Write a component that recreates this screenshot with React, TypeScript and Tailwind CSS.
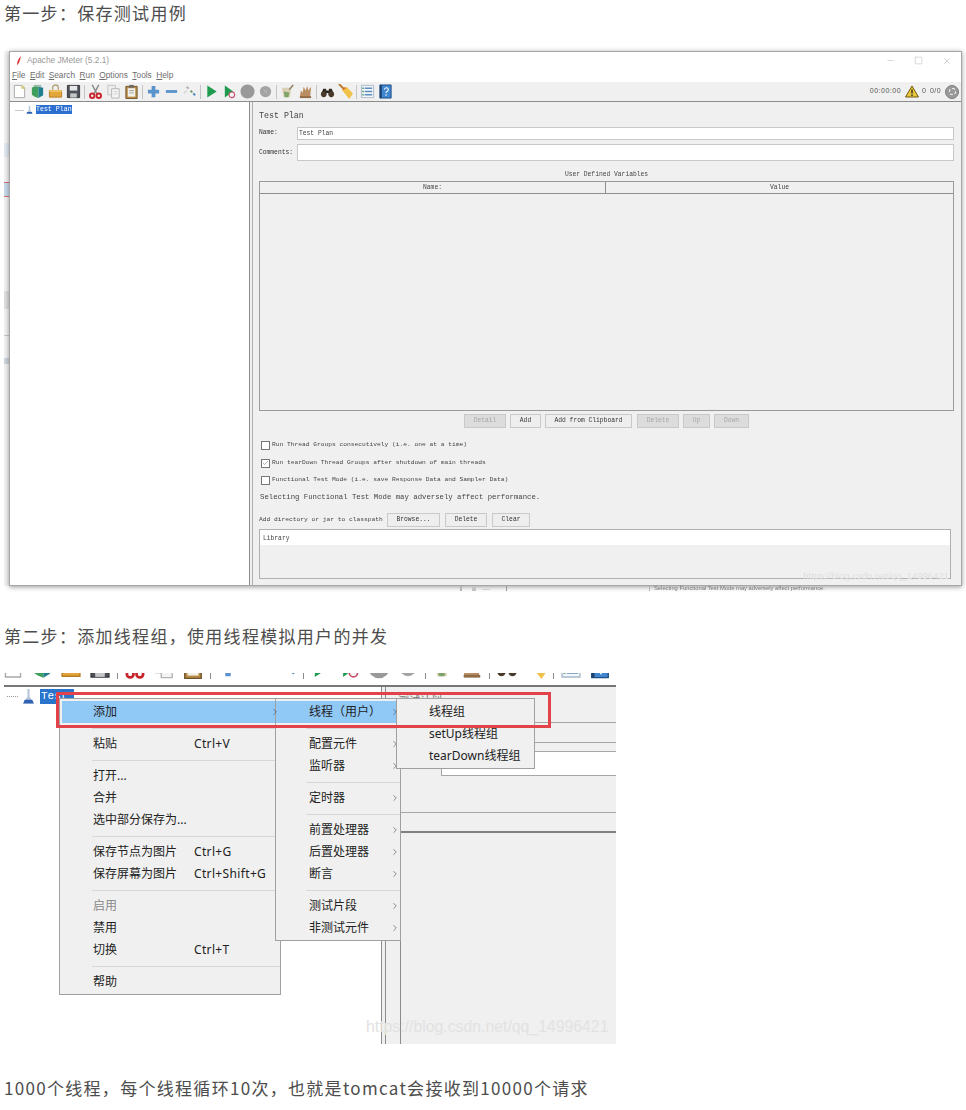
import { Minus, Square, X, Check, ChevronRight } from "lucide-react";

const Icon = ({ name, size = 16 }: { name: string; size?: number }) => {
  const shapes: Record<string, React.ReactNode> = {
    new: (
      <>
        <path d="M2.5 1.5h8l3 3v10h-11z" fill="#fff" stroke="#a8a8a8" />
        <path d="M10.5 1.5v3h3z" fill="#efe38a" stroke="#c8bd62" />
      </>
    ),
    templates: (
      <>
        <path d="M2 4l4-2.5 3 1.5v12l-4-1.5-3-2z" fill="#3f9f5d" />
        <path d="M9 3l5 1v8l-5 3z" fill="#1f7f8f" />
        <path d="M4 1h8v2H4z" fill="#9fb9a8" />
      </>
    ),
    open: (
      <>
        <path d="M5 6V3.500a3 2.500 0 0 1 6 0V6" fill="none" stroke="#b9a27a" strokeWidth="1.500" />
        <path d="M1.500 7h13v7h-13z" fill="#e3a63a" stroke="#b97f24" />
        <path d="M1.500 6.500h13v2h-13z" fill="#f2c465" />
      </>
    ),
    save: (
      <>
        <path d="M1.500 1.500h13v13h-13z" fill="#4c5258" stroke="#34383c" />
        <path d="M4 2h8v5H4z" fill="#e8e8e8" />
        <path d="M4.500 10h7v4.500h-7z" fill="#c4c6c8" />
      </>
    ),
    cut: (
      <>
        <path d="M4.500 1l4.800 9M11.500 1L6.700 10" stroke="#8b8b8b" strokeWidth="1.500" fill="none" />
        <circle cx="4.500" cy="12.500" r="2.400" fill="none" stroke="#c9232b" strokeWidth="2" />
        <circle cx="11.500" cy="12.500" r="2.400" fill="none" stroke="#c9232b" strokeWidth="2" />
      </>
    ),
    copy: (
      <>
        <path d="M2 1.500h8v10H2z" fill="#efefef" stroke="#c0c0c0" />
        <path d="M6 5h8v10H6z" fill="#f4f4f4" stroke="#b4b4b4" />
        <path d="M8 8h4M8 10.500h4" stroke="#cfcfcf" />
      </>
    ),
    paste: (
      <>
        <path d="M2 2.500h12v13H2z" fill="#b98a43" stroke="#6e5330" />
        <path d="M4 4.500h8v9H4z" fill="#f2f0ea" />
        <path d="M5.500 1h5v3h-5z" fill="#6f6a62" />
        <path d="M5.500 7h5M5.500 9.500h5" stroke="#9c9c9c" />
      </>
    ),
    plus: <path d="M6 2h4v4h4v4h-4v4H6v-4H2V6h4z" fill="#5b93cc" />,
    minus: <path d="M2 6.500h12v3H2z" fill="#5b93cc" />,
    toggle: (
      <>
        <path d="M5 3l2 2" stroke="#a8a8a8" strokeWidth="2" />
        <path d="M9 7l2 2" stroke="#6f9f6f" strokeWidth="2" />
        <path d="M12 10l2 2" stroke="#4d86c4" strokeWidth="2" />
        <path d="M2 10l3-3" stroke="#d0d0d0" strokeWidth="1.500" />
      </>
    ),
    play: <path d="M3.500 1.500l10 6.500-10 6.500z" fill="#1f9b4d" />,
    playno: (
      <>
        <path d="M3 1.500l9 6.500-9 6.500z" fill="#1f9b4d" />
        <circle cx="10.500" cy="11.500" r="3" fill="#f4f4f4" stroke="#c8506a" strokeWidth="1.200" />
      </>
    ),
    stop: <circle cx="8" cy="8" r="7.500" fill="#999999" />,
    shutdown: (
      <>
        <circle cx="8" cy="8" r="6" fill="#a3a3a3" />
        <path d="M6 6l4 4M10 6l-4 4" stroke="#bdbdbd" />
      </>
    ),
    clear: (
      <>
        <path d="M2 4h10l-1.500 10H4z" fill="#d8cfb4" />
        <path d="M4 8l6 1-1 5H5z" fill="#7fa36b" />
        <path d="M10 6l4-5" stroke="#8c7a5c" strokeWidth="1.500" />
      </>
    ),
    clearall: (
      <>
        <path d="M2 14l1-7 2 2 1-6 2 4 2-5 1 5 3-4-1 11z" fill="#b98e63" />
        <path d="M2 14h12" stroke="#8f6a45" strokeWidth="2" />
      </>
    ),
    find: (
      <>
        <path d="M1 11l2.500-6h3l.500 6zM15 11l-2.500-6h-3l-.500 6z" fill="#33291f" />
        <circle cx="4" cy="11" r="3" fill="#4a3a2c" />
        <circle cx="12" cy="11" r="3" fill="#4a3a2c" />
        <path d="M6.500 7h3v2.500h-3z" fill="#1d1712" />
      </>
    ),
    broom: (
      <>
        <path d="M1 0l7 7" stroke="#b9772c" strokeWidth="2" />
        <path d="M4 6l5-3 7 7-4 6z" fill="#f0c24a" />
        <path d="M5 5.500l3-1.500" stroke="#d8722c" strokeWidth="2" />
      </>
    ),
    list: (
      <>
        <path d="M1.500 1.500h13v13h-13z" fill="#f3f6fa" stroke="#a8b8ca" />
        <path d="M5 4.500h8M5 8h8M5 11.500h8" stroke="#5f8cbc" strokeWidth="1.500" />
        <path d="M2.500 4.500h1.500M2.500 8h1.500M2.500 11.500h1.500" stroke="#3f8f5a" strokeWidth="1.500" />
      </>
    ),
    help: (
      <>
        <path d="M2 1h12v14H2z" fill="#3f86cf" stroke="#1f4f86" />
        <path d="M2 1h2v14H2z" fill="#1c3f6b" />
        <path d="M7 6a2 2 0 1 1 2.500 2c-.6.300-.9.700-.9 1.500M8.600 11v1.500" fill="none" stroke="#fff" strokeWidth="1.200" />
      </>
    ),
  };
  return (
    <svg width={size} height={size} viewBox="0 0 16 16" className="shrink-0">
      {shapes[name]}
    </svg>
  );
};

const tools = [
  ["new", "templates", "open", "save"],
  ["cut", "copy", "paste"],
  ["plus", "minus", "toggle"],
  ["play", "playno", "stop", "shutdown"],
  ["clear", "clearall"],
  ["find", "broom"],
  ["list", "help"],
];

const Toolbar = () => (
  <div className="flex items-center h-[20px] bg-[#f0f0f0] border-b border-[#8c8c8c]">
    {tools.map((group, i) => (
      <div key={i} className="flex items-center">
        {i > 0 && <div className="w-[1px] h-[14px] mx-[1.500px] bg-[#c4c4c4]" />}
        {group.map((n) => (
          <div key={n} className="w-[18px] flex justify-center">
            <Icon name={n} size={15} />
          </div>
        ))}
      </div>
    ))}
    <div className="ml-auto flex items-center text-[7px] text-[#555] [font-family:'Liberation_Sans',sans-serif] pr-[2px]">
      <span className="tracking-[0.5px]">00:00:00</span>
      <svg width="14" height="13" viewBox="0 0 14 13" className="ml-[4px]">
        <path d="M7 1l6.500 11H.5z" fill="#e8c53a" stroke="#6f5a10" />
        <path d="M7 4.500v4M7 9.500v1.500" stroke="#222" strokeWidth="1.300" />
      </svg>
      <span className="ml-[3px] w-[8px]">0</span>
      <span className="tracking-[0.4px]">0/0</span>
      <div className="ml-[4px] w-[14px] h-[14px] rounded-full bg-[#9a9a9a] border border-[#7c7c7c] flex items-center justify-center">
        <div className="w-[7px] h-[7px] rounded-full border border-dashed border-white" />
      </div>
    </div>
  </div>
);

const Btn = ({ w, label, off }: { w: string; label: string; off?: boolean }) => (
  <div
    className={`${w} h-[14px] flex items-center justify-center border border-[#c9c9c9] text-[6.300px] ${
      off ? "bg-[#dcdcdc] text-[#a8a8a8]" : "bg-[#eeeeee] text-[#333]"
    }`}
  >
    {label}
  </div>
);

const CheckRow = ({ label, checked, mt }: { label: string; checked?: boolean; mt: string }) => (
  <div className={`flex items-center ${mt} pl-[2px] h-[10px]`}>
    <div className="w-[9px] h-[9px] bg-white border border-[#777] flex items-center justify-center">
      {checked && <Check size={8} strokeWidth={1.500} className="text-[#444]" />}
    </div>
    <span className="ml-[2px] text-[6.250px] text-[#444]">{label}</span>
  </div>
);

const JMeterWindow = () => (
  <div className="relative w-[953px] h-[535px] mt-[6px] bg-[#f0f0f0] border border-[#a6a6a6] shadow-[0_1px_5px_rgba(0,0,0,0.4)] flex flex-col blur-[0.3px] [font-family:'Liberation_Mono',monospace]">
    <div className="bg-white h-[30px] flex flex-col">
      <div className="flex items-center h-[17px] pl-[4px]">
        <svg width="10" height="10" viewBox="0 0 10 10">
          <path d="M7 0C5 2 3 5 3 9c2-1 3-5 4-9z" fill="#d8282c" />
        </svg>
        <span className="ml-[3px] text-[8.300px] text-[#9a9a9a] [font-family:'Liberation_Sans',sans-serif]">
          Apache JMeter (5.2.1)
        </span>
        <div className="ml-auto flex items-center gap-[19px] pr-[9px] text-[#9d9d9d]">
          <Minus size={9} strokeWidth={1} />
          <Square size={9} strokeWidth={1} />
          <X size={10} strokeWidth={1} />
        </div>
      </div>
      <div className="flex gap-[4.500px] pl-[2px] text-[8.300px] text-[#6e6e6e] [font-family:'Liberation_Sans',sans-serif]">
        {["File", "Edit", "Search", "Run", "Options", "Tools", "Help"].map((m) => (
          <span key={m}>
            <span className="underline">{m[0]}</span>
            {m.slice(1)}
          </span>
        ))}
      </div>
    </div>
    <Toolbar />
    <div className="flex flex-1 min-h-0">
      <div className="w-[240px] bg-white border-r border-[#8a8a8a] flex items-start pt-[3px] pl-[5px]">
        <div className="w-[9px] h-[1px] bg-[#c8c8c8] mt-[5px]" />
        <svg width="9" height="10" viewBox="0 0 12 11" className="ml-[1px]">
          <path d="M5 0h2v5l3 5H2l3-5z" fill="#b8c8da" />
          <path d="M3 8h6l1 2.500H2z" fill="#2f62b5" />
        </svg>
        <span className="ml-[2px] h-[9px] leading-[9px] bg-[#2b6fd0] text-white text-[6.600px]">Test Plan</span>
      </div>
      <div className="ml-[2px] flex-1 border-l border-[#b0b0b0] pl-[6px] pr-[7px] flex flex-col">
        <div className="mt-[8px] h-[12px] leading-[12px] text-[8.300px] text-[#444]">Test Plan</div>
        <div className="flex items-center mt-[4px] h-[14px]">
          <span className="w-[38px] text-[6.300px] text-[#333]">Name:</span>
          <div className="flex-1 h-[13px] bg-white border border-[#c8c8c8] pl-[1px] leading-[11px] text-[6.300px] text-[#444]">
            Test Plan
          </div>
        </div>
        <div className="flex items-center mt-[4px] h-[17px]">
          <span className="w-[38px] text-[6.300px] text-[#333]">Comments:</span>
          <div className="flex-1 h-[17px] bg-white border border-[#c8c8c8]" />
        </div>
        <div className="text-center mt-[9px] h-[9px] leading-[9px] text-[6.300px] text-[#444]">
          User Defined Variables
        </div>
        <div className="mt-[2px] h-[230px] border border-[#9a9a9a] flex flex-col">
          <div className="flex h-[12px] bg-[#f0f0f0] border-b border-[#8f8f8f] text-[6.300px] text-[#444] leading-[12px] text-center">
            <div className="w-[346px] border-r border-[#8f8f8f]">Name:</div>
            <div className="flex-1">Value</div>
          </div>
        </div>
        <div className="mt-[3px] flex justify-start pl-[205px] gap-[4px]">
          <Btn w="w-[42px]" label="Detail" off />
          <Btn w="w-[31px]" label="Add" />
          <Btn w="w-[87px]" label="Add from Clipboard" />
          <Btn w="w-[42px] ml-[1px]" label="Delete" off />
          <Btn w="w-[27px]" label="Up" off />
          <Btn w="w-[35px]" label="Down" off />
        </div>
        <CheckRow mt="mt-[12px]" label="Run Thread Groups consecutively (i.e. one at a time)" />
        <CheckRow mt="mt-[8px]" label="Run tearDown Thread Groups after shutdown of main threads" checked />
        <CheckRow mt="mt-[7px]" label="Functional Test Mode (i.e. save Response Data and Sampler Data)" />
        <div className="mt-[7px] pl-[1px] h-[10px] leading-[10px] text-[7.300px] text-[#444]">
          Selecting Functional Test Mode may adversely affect performance.
        </div>
        <div className="flex items-center mt-[11px] h-[14px]">
          <span className="w-[128px] text-[6.250px] text-[#444]">Add directory or jar to classpath</span>
          <div className="flex gap-[5px]">
            <Btn w="w-[53px]" label="Browse..." />
            <Btn w="w-[42px]" label="Delete" />
            <Btn w="w-[38px]" label="Clear" />
          </div>
        </div>
        <div className="mt-[2px] mr-[3px] h-[50px] border border-[#b0b0b0] bg-[#f0f0f0]">
          <div className="h-[15px] bg-white pl-[3px] leading-[17px] text-[6.300px] text-[#444]">Library</div>
        </div>
      </div>
    </div>
    <div className="absolute right-[12px] bottom-[2px] text-[9.500px] text-[#dedede] whitespace-nowrap [font-family:'Liberation_Sans',sans-serif]">
      https://blog.csdn.net/qq_14996421
    </div>
  </div>
);

type Row = { label?: string; keys?: string; arrow?: boolean; sep?: boolean; muted?: boolean; hot?: boolean };

const mainMenu: Row[] = [
  { label: "添加", hot: true },
  { sep: true },
  { label: "粘贴", keys: "Ctrl+V" },
  { sep: true },
  { label: "打开..." },
  { label: "合并" },
  { label: "选中部分保存为..." },
  { sep: true },
  { label: "保存节点为图片", keys: "Ctrl+G" },
  { label: "保存屏幕为图片", keys: "Ctrl+Shift+G" },
  { sep: true },
  { label: "启用", muted: true },
  { label: "禁用" },
  { label: "切换", keys: "Ctrl+T" },
  { sep: true },
  { label: "帮助" },
];

const addMenu: Row[] = [
  { label: "线程（用户）", hot: true },
  { sep: true },
  { label: "配置元件", arrow: true },
  { label: "监听器", arrow: true },
  { sep: true },
  { label: "定时器", arrow: true },
  { sep: true },
  { label: "前置处理器", arrow: true },
  { label: "后置处理器", arrow: true },
  { label: "断言", arrow: true },
  { sep: true },
  { label: "测试片段", arrow: true },
  { label: "非测试元件", arrow: true },
];

const threadMenu: Row[] = [{ label: "线程组" }, { label: "setUp线程组" }, { label: "tearDown线程组" }];

const MenuRows = ({ rows, pad, keyCol }: { rows: Row[]; pad: string; keyCol?: string }) => (
  <>
    {rows.map((r, i) =>
      r.sep ? (
        <div key={i} className="h-[10px] flex items-center pl-[30px]">
          <div className="w-full h-[1px] bg-[#d7d7d7]" />
        </div>
      ) : (
        <div
          key={i}
          className={`h-[22px] flex items-center ${pad} pr-[1px] ${r.hot ? "bg-[#90c8f6]" : ""} ${
            r.muted ? "text-[#8a8a8a]" : "text-[#222]"
          }`}
        >
          <span className={keyCol ?? ""}>{r.label}</span>
          {r.keys && <span className="tracking-[0.35px]">{r.keys}</span>}
          {r.arrow && <ChevronRight size={10} strokeWidth={1.300} className="ml-auto -mr-[1px] text-[#333]" />}
        </div>
      ),
    )}
  </>
);

const ContextShot = () => (
  <div className="relative ml-[4px] w-[612px] h-[371px] mt-[22px] bg-white [font-family:'Noto_Sans','Noto_Sans_CJK_SC',sans-serif] text-[12px]">
    <div className="h-[12px] overflow-hidden flex items-end pb-[6px] -ml-[6px] w-[618px]">
      {tools.map((group, i) => (
        <div key={i} className="flex items-end">
          {i > 0 && <div className="w-[1px] h-[18px] mx-[2.500px] bg-[#8c8c8c]" />}
          {group.map((n) => (
            <div key={n} className="w-[29px] flex justify-center">
              <Icon name={n} size={22} />
            </div>
          ))}
        </div>
      ))}
    </div>
    <div className="h-[2px] bg-[#777]" />
    <div className="flex h-[357px]">
      <div className="w-[377px] bg-white flex items-start pt-[2px] pl-[3px]">
        <div className="mt-[7px] w-[11px] border-t border-dotted border-[#999]" />
        <svg width="13" height="15" viewBox="0 0 12 14" className="ml-[4px]">
          <path d="M5 0h2v7l4 6.500H1l4-6.500z" fill="#b8c8da" />
          <path d="M2.500 10h7l1.500 3.500H1z" fill="#2f62b5" />
        </svg>
        <span className="ml-[5px] w-[34px] h-[15px] bg-[#2a74cc] text-white text-[11px] leading-[14px] pl-[1px] [font-family:'Liberation_Mono',monospace]">
          Test
        </span>
      </div>
      <div className="w-[5px] border-x border-[#8c8c8c] bg-[#f0f0f0]" />
      <div className="flex-1 bg-[#f0f0f0] flex flex-col">
        <div className="h-[36px] border-b border-[#a6a6a6]">
          <div className="h-[11px] overflow-hidden pl-[12px] text-[11px] leading-[27px] text-[#777]">测试计划</div>
        </div>
        <div className="h-[20px] border-b border-[#a6a6a6]" />
        <div className="mt-[8px] ml-[55px] h-[25px] bg-white border border-[#a6a6a6] border-r-0" />
        <div className="h-[37px] border-b border-[#a6a6a6]" />
        <div className="h-[20px] border-b-2 border-[#808080]" />
        <div className="flex-1 ml-[14px] border-l border-[#8c8c8c]" />
      </div>
    </div>

    {/* right click menus sit over the shot */}
    <div className="absolute left-[55px] top-[25px] w-[222px] h-[297px] bg-[#f0f0f0] border border-[#a0a0a0] pt-[2px] pl-[2px]">
      <MenuRows rows={mainMenu} pad="pl-[31px]" keyCol="w-[101px] shrink-0" />
    </div>
    <div className="absolute left-[271px] top-[25px] w-[126px] h-[243px] bg-[#f0f0f0] border border-[#a0a0a0] pt-[2px]">
      <MenuRows rows={addMenu} pad="pl-[33px]" />
    </div>
    <div className="absolute left-[392px] top-[25px] w-[139px] h-[71px] bg-[#f0f0f0] border border-[#a0a0a0] pt-[2px]">
      <MenuRows rows={threadMenu} pad="pl-[32px]" />
    </div>
    <ChevronRight size={10} strokeWidth={1.300} className="absolute left-[266px] top-[34px] text-[#333]" />
    <ChevronRight size={10} strokeWidth={1.300} className="absolute left-[386px] top-[34px] text-[#333]" />
    <div className="absolute left-[52px] top-[19px] w-[495px] h-[36px] border-[3px] border-[#e2434b]" />
    <div className="absolute left-[362px] top-[342px] text-[15.800px] text-[#e2e2e2] whitespace-nowrap [font-family:'Liberation_Sans',sans-serif]">
      https://blog.csdn.net/qq_14996421
    </div>
  </div>
);

const Para = ({ children, cls }: { children: string; cls: string }) => (
  <p className={`${cls} pl-[4px] h-[28px] leading-[26px] text-[17px] tracking-[1.300px] text-[#4d4d4d] whitespace-nowrap`}>{children}</p>
);

// bits of the desktop behind the JMeter window
const Gutter = () => (
  <div className="w-[5px] ml-[4px] shrink-0 mt-[6px] h-[535px] bg-[#f4f4f4] flex flex-col blur-[0.4px]">
    <div className="mt-[92px] h-[14px] bg-[#e3ebf3]" />
    <div className="mt-[25px] h-[15px] bg-[#c9dced] border-y border-[#d9707a]" />
    <div className="mt-[94px] h-[18px] bg-[#e0e0e0]" />
    <div className="mt-[26px] h-[1px] bg-[#c8c8c8]" />
    <div className="mt-[22px] h-[6px] bg-[#cfd6de]" />
  </div>
);

const Remnants = () => (
  <div className="flex h-[5px] ml-[9px] w-[953px] blur-[0.4px] items-start">
    <div className="ml-[451px] w-[2px] h-[5px] bg-[#b5b5b5]" />
    <div className="ml-[10px] w-[4px] h-[5px] bg-[#c4c4c4]" />
    <div className="ml-[6px] w-[8px] h-[4px] border-b border-[#d0d0d0]" />
    <div className="ml-[16px] w-[1px] h-[5px] bg-[#9a9a9a]" />
    <div className="ml-[142px] w-[1px] h-[5px] bg-[#b5b5b5]" />
    <div className="ml-[4px] text-[5.800px] leading-[5px] text-[#777] whitespace-nowrap [font-family:'Liberation_Sans',sans-serif]">
      Selecting Functional Test Mode may adversely affect performance.
    </div>
  </div>
);

export default function App() {
  return (
    <div className="w-[966px] h-[1110px] bg-white overflow-hidden [font-family:'Noto_Sans_CJK_SC',sans-serif]">
      <Para cls="">第一步：保存测试用例</Para>
      <div className="mt-[17px] h-[545px]">
        <div className="flex">
          <Gutter />
          <JMeterWindow />
        </div>
        <Remnants />
      </div>
      <Para cls="mt-[33px]">第二步：添加线程组，使用线程模拟用户的并发</Para>
      <ContextShot />
      <Para cls="mt-[31px]">1000个线程，每个线程循环10次，也就是tomcat会接收到10000个请求</Para>
    </div>
  );
}
